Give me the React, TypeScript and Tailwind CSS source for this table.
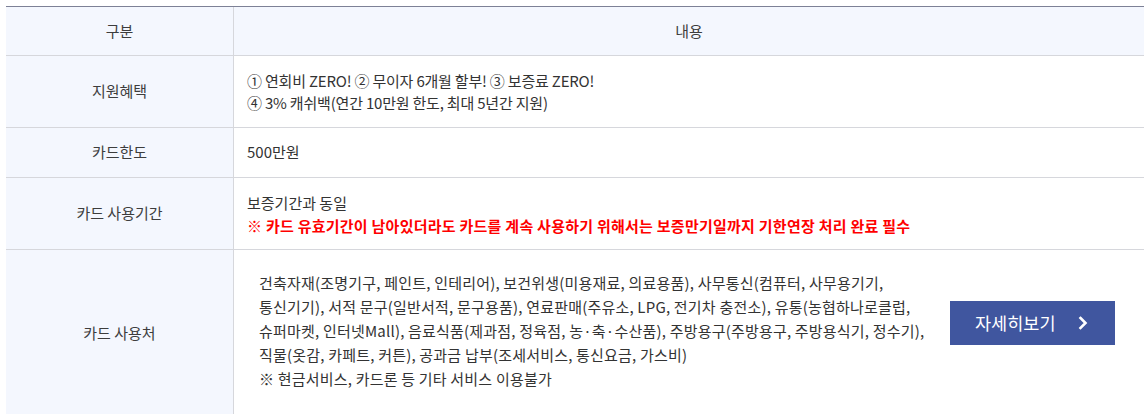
import React from "react";

const font = { fontFamily: '"Noto Sans CJK KR", "Noto Sans", sans-serif' };

export default function App() {
  return (
    <div className="w-[1148px] h-[414px] overflow-hidden bg-white pt-[6px] pl-[6px]" style={font}>
      <div className="w-[1138px] border-t border-[#7d8196] text-[15px]">
        {/* header */}
        <div className="grid grid-cols-[228px_1fr] h-[49px] border-b border-[#d6d7dc] bg-[#f4f7fe] text-[#3d3d3d]">
          <div className="flex items-center justify-center border-r border-[#d6d7dc]">구분</div>
          <div className="flex items-center justify-center">내용</div>
        </div>
        {/* row 1 */}
        <div className="grid grid-cols-[228px_1fr] h-[72px] border-b border-[#d6d7dc]">
          <div className="flex items-center justify-center border-r border-[#d6d7dc] bg-[#f4f7fe] text-[#3d3d3d]">지원혜택</div>
          <div className="flex flex-col justify-center pl-[13px] leading-[22px] tracking-[-0.2px] text-[#333]">
            <div>① 연회비 ZERO! ② 무이자 6개월 할부! ③ 보증료 ZERO!</div>
            <div>④ 3% 캐쉬백(연간 10만원 한도, 최대 5년간 지원)</div>
          </div>
        </div>
        {/* row 2 */}
        <div className="grid grid-cols-[228px_1fr] h-[50px] border-b border-[#d6d7dc]">
          <div className="flex items-center justify-center border-r border-[#d6d7dc] bg-[#f4f7fe] text-[#3d3d3d]">카드한도</div>
          <div className="flex items-center pl-[13px] text-[#333]">500만원</div>
        </div>
        {/* row 3 */}
        <div className="grid grid-cols-[228px_1fr] h-[72px] border-b border-[#d6d7dc]">
          <div className="flex items-center justify-center border-r border-[#d6d7dc] bg-[#f4f7fe] text-[#3d3d3d]">카드 사용기간</div>
          <div className="flex flex-col justify-center pl-[13px] leading-[23px]">
            <div className="text-[#333]">보증기간과 동일</div>
            <div className="text-[#ff0000] font-bold tracking-[0.25px]">※ 카드 유효기간이 남아있더라도 카드를 계속 사용하기 위해서는 보증만기일까지 기한연장 처리 완료 필수</div>
          </div>
        </div>
        {/* row 4 */}
        <div className="grid grid-cols-[228px_1fr] h-[166px]">
          <div className="flex items-center justify-center border-r border-[#d6d7dc] bg-[#f4f7fe] text-[#3d3d3d]">카드 사용처</div>
          <div className="flex items-start pl-[25px] pt-[21px] text-[#333]">
            <div className="leading-[24px] whitespace-nowrap tracking-[0.2px]">
              <div>건축자재(조명기구, 페인트, 인테리어), 보건위생(미용재료, 의료용품), 사무통신(컴퓨터, 사무용기기,</div>
              <div>통신기기), 서적 문구(일반서적, 문구용품), 연료판매(주유소, LPG, 전기차 충전소), 유통(농협하나로클럽,</div>
              <div>슈퍼마켓, 인터넷Mall), 음료식품(제과점, 정육점, 농·축·수산품), 주방용구(주방용구, 주방용식기, 정수기),</div>
              <div>직물(옷감, 카페트, 커튼), 공과금 납부(조세서비스, 통신요금, 가스비)</div>
              <div>※ 현금서비스, 카드론 등 기타 서비스 이용불가</div>
            </div>
            <button className="ml-auto mr-[29px] mt-[30px] flex h-[44px] w-[165px] shrink-0 items-center bg-[#40569f] pl-[25px] text-[17.5px] text-white">
              <span>자세히보기</span>
              <svg className="ml-[22px]" width="10" height="14" viewBox="0 0 10 14" fill="none">
                <polyline points="2.5,2 7.5,7 2.5,12" stroke="white" strokeWidth="2.6" strokeLinecap="square" />
              </svg>
            </button>
          </div>
        </div>
      </div>
    </div>
  );
}
